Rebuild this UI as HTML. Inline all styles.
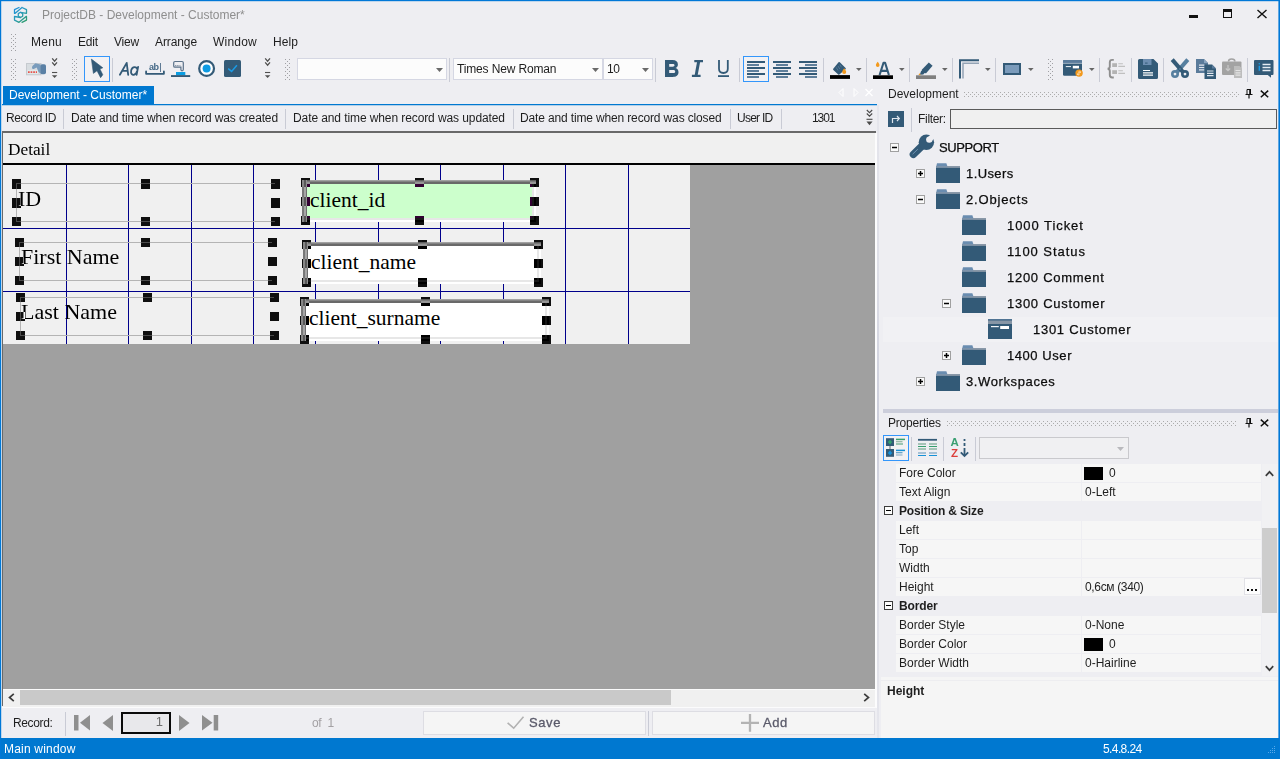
<!DOCTYPE html>
<html>
<head>
<meta charset="utf-8">
<title>ProjectDB</title>
<style>
*{box-sizing:border-box;margin:0;padding:0}
html,body{width:1280px;height:759px;overflow:hidden;background:#eeeef2}
body{font-family:"Liberation Sans",sans-serif;font-size:12px;color:#1e1e1e;position:relative}
.a{position:absolute}
.t{position:absolute;white-space:nowrap;line-height:16px;height:16px}
.serif{font-family:"Liberation Serif",serif}
.h{position:absolute;width:9px;height:9px;background:#fff;mix-blend-mode:difference}
.dt{font-size:22px;line-height:24px;height:24px;color:#000}
.gv{position:absolute;top:165px;height:179px;width:1px;background:#00008b}
.gh{position:absolute;left:3px;width:687px;height:1px;background:#00008b}
.sep{position:absolute;width:1px;background:#c9cbd5}
.grip{position:absolute;width:5px;background:
 linear-gradient(#a0a0a4,#a0a0a4) 0 0/1px 1px,
 linear-gradient(#a0a0a4,#a0a0a4) 4px 0/1px 1px,
 linear-gradient(#a0a0a4,#a0a0a4) 2px 2px/1px 1px;background-repeat:repeat-y;background-size:1px 4px,1px 4px,1px 4px;
 background-image:linear-gradient(#a0a0a4 1px,transparent 1px),linear-gradient(#a0a0a4 1px,transparent 1px),linear-gradient(transparent 2px,#a0a0a4 2px,#a0a0a4 3px,transparent 3px);background-position:0 0,4px 0,2px 0}
.hgrip{position:absolute;height:5px;background-repeat:repeat-x;background-size:4px 1px,4px 1px,4px 1px;
 background-image:linear-gradient(90deg,#ababab 1px,transparent 1px),linear-gradient(90deg,#ababab 1px,transparent 1px),linear-gradient(90deg,transparent 2px,#ababab 2px,#ababab 3px,transparent 3px);background-position:0 0,0 4px,0 2px}
.ol{position:absolute;border:1px solid #b4b4b4;border-right:none}
.tree{font-size:13px;line-height:16px;color:#0c0c0c;-webkit-text-stroke:0.250px #0c0c0c}
.prow{position:absolute;left:895px;width:366px;height:19px}
.prow .n{position:absolute;left:4px;top:2px;line-height:15px;white-space:nowrap}
.prow .v{position:absolute;left:190px;top:2px;line-height:15px;white-space:nowrap}
</style>
</head>
<body>
<!-- window frame -->
<div class="a" id="frame" style="left:0;top:0;width:1280px;height:759px;border:1px solid #0078d7;border-bottom:none;z-index:5;pointer-events:none"></div><div class="a" style="left:1278px;top:1px;width:1px;height:737px;background:#0078d7;opacity:.6;z-index:5"></div><div class="a" style="left:1px;top:1px;width:1px;height:737px;background:#0078d7;opacity:.2;z-index:5"></div><div class="a" style="left:1px;top:1px;width:1278px;height:1px;background:#0078d7;opacity:.2;z-index:5"></div>

<!-- TITLE BAR -->
<div id="titlebar">
<svg class="a" style="left:8px;top:2px" width="28" height="26" viewBox="8 2 28 26" fill="none" stroke="url(#lg)" stroke-width="1.300" stroke-linejoin="round" stroke-linecap="round"><defs><linearGradient id="lg" gradientUnits="userSpaceOnUse" x1="14" y1="8" x2="27" y2="22"><stop offset="0" stop-color="#1e8fe0"/><stop offset=".5" stop-color="#2a9cb4"/><stop offset="1" stop-color="#2f9c62"/></linearGradient></defs>
<path d="M14.500 13.400V9.700L19 7.500M22 7.500L14.900 13.400M22 7.500L26.500 9.700V13.300L20.500 12.300"/><path d="M26.500 16.400V20.100L22 22.300M19 22.300L26.100 16.400M19 22.300L14.500 20.100V16.500L20.500 17.500"/><path d="M20.500 12.300L22.700 13.600V16.200L20.500 17.500L18.300 16.200V13.600Z"/></svg>
<div class="t" style="left:42px;top:7px;font-size:12px;color:#8e8e8e" id="title">ProjectDB - Development - Customer*</div>
<div class="a" style="left:1189px;top:15px;width:9px;height:3px;background:#111"></div>
<div class="a" style="left:1223px;top:9px;width:9px;height:9px;border:1px solid #111;border-top-width:3px"></div>
<svg class="a" style="left:1256px;top:8px" width="12" height="12" viewBox="0 0 12 12" stroke="#111" stroke-width="1.4"><path d="M1.5 2l9 8M10.5 2l-9 8"/></svg>
</div>

<!-- MENU -->
<div id="menubar" style="font-size:12px">
<div class="t" style="left:31px;top:34px;letter-spacing:0.24px">Menu</div>
<div class="t" style="left:78px;top:34px;letter-spacing:-0.17px">Edit</div>
<div class="t" style="left:114px;top:34px;letter-spacing:-0.2px">View</div>
<div class="t" style="left:155px;top:34px;letter-spacing:-0.1px">Arrange</div>
<div class="t" style="left:213px;top:34px;letter-spacing:0.22px">Window</div>
<div class="t" style="left:273px;top:34px;letter-spacing:0.08px">Help</div>
</div>

<!-- TOOLBAR -->
<div id="toolbar">
<div class="grip" style="left:11px;top:34px;height:18px"></div>
<div class="grip" style="left:11px;top:59px;height:22px"></div>
<!-- card+hand (disabled) -->
<svg class="a" style="left:26px;top:62px" width="21" height="14" viewBox="0 0 21 14"><rect x=".500" y="1.500" width="14.500" height="11.300" fill="#d8dde1" stroke="#c6cacf"/><rect x="1.500" y="8" width="10.500" height="4" fill="#e0eaeb"/><path d="M2 10.100h9" stroke="#e8504a" stroke-width="1.800" stroke-dasharray="1.700 .900"/><path d="M6 5.300C6 4 8 2.500 9.500 1.200L14.500 2.500V11.500L12.500 10L10.700 5.600L7.800 7C6.500 7.300 6 6.500 6 5.300z" fill="#7a9cbd"/><rect x="14.300" y="2.200" width="5.700" height="10" rx="1.800" fill="#5a80a5"/></svg>
<svg class="a" style="left:51px;top:57px" width="8" height="22" viewBox="0 0 8 22" fill="none" stroke="#505050" stroke-width="1.300"><path d="M1.200 1.400l2.400 2.800 2.400-2.800M1.200 5.400l2.400 2.800 2.400-2.800"/><path d="M1 15.500h5.200" stroke-width="1.100"/><path d="M.900 18.200h5.400L3.600 21z" fill="#505050" stroke="none"/></svg>
<div class="grip" style="left:72px;top:59px;height:22px"></div>
<div class="a" style="left:84px;top:56px;width:26px;height:26px;border:1px solid #3396fb;background:#f2f1f3"></div>
<svg class="a" style="left:89px;top:58px" width="16" height="21" viewBox="0 0 16 21"><path d="M2.400 1.100L13.800 9.800L10.900 11L13.800 16.800L11.600 19.700L8 12.700L4.400 15.400z" fill="#335a77" stroke="#335a77" stroke-width=".600" stroke-linejoin="round"/></svg>
<div class="sep" style="left:112px;top:58px;height:24px"></div>
<svg class="a" style="left:117px;top:60px" width="24" height="18" viewBox="117 60 24 18" fill="none" stroke="#335a77" stroke-width="1.800" stroke-linecap="round" stroke-linejoin="round"><path d="M119.900 74.800L126.700 62.900L128.200 74.800M122.600 70.800h5"/><path d="M138.100 66.800L136.600 74.900M137.500 69.500C136.700 66.300 132.300 66 131.200 70.200C130.300 74.200 132.600 75.400 134.300 74.700C135.900 74 136.700 72.700 137 71.300"/></svg>
<!-- abl -->
<div class="t" style="left:149px;top:61px;font-size:9px;line-height:12px;height:12px;font-weight:bold;color:#456987;letter-spacing:-0.550px">ab</div><div class="a" style="left:159.500px;top:63px;width:1.400px;height:9px;background:#5f7a94"></div>
<svg class="a" style="left:145px;top:69px" width="21" height="7" viewBox="0 0 21 7" fill="none" stroke="#335a77" stroke-width="1.800" stroke-linecap="round" stroke-linejoin="round"><path d="M1.100 2.500v2.300h17.800v-2.300"/></svg>
<!-- button -->
<svg class="a" style="left:171px;top:60px" width="20" height="18" viewBox="0 0 20 18"><path d="M4 1.500h7a1.300 1.300 0 0 1 1.300 1.300v6.800a1.200 1.200 0 0 1-2.400 0v-2.400h-5.900a1.300 1.300 0 0 1-1.300-1.300v-3.100a1.300 1.300 0 0 1 1.300-1.300z" fill="none" stroke="#5a7189" stroke-width="1.200"/><path d="M4 5.700h5.500" stroke="#7b8b9b" stroke-width="1" stroke-dasharray="1.200 .500"/><rect x="5" y="12" width="9.300" height="3.200" fill="#0a9de2"/><rect x="0" y="15.100" width="19.200" height="1.900" fill="#335a77"/></svg>
<!-- radio -->
<svg class="a" style="left:197px;top:59px" width="19" height="19" viewBox="0 0 19 19"><circle cx="9.600" cy="9.500" r="7.400" fill="#fff" stroke="#335a77" stroke-width="2.200"/><circle cx="9.600" cy="9.500" r="4" fill="#0d9be3"/></svg>
<!-- checkbox -->
<svg class="a" style="left:224px;top:60px" width="17" height="17" viewBox="0 0 17 17"><rect x="0" y="0" width="17" height="17" rx="1.500" fill="#335a77"/><path d="M4.200 8.600l3.400 2.800 5.300-6.200" fill="none" stroke="#1a9be6" stroke-width="1.500"/></svg>
<svg class="a" style="left:264px;top:57px" width="8" height="22" viewBox="0 0 8 22" fill="none" stroke="#505050" stroke-width="1.300"><path d="M1.200 1.400l2.400 2.800 2.400-2.800M1.200 5.400l2.400 2.800 2.400-2.800"/><path d="M1 15.500h5.200" stroke-width="1.100"/><path d="M.900 18.200h5.400L3.600 21z" fill="#505050" stroke="none"/></svg>
<div class="grip" style="left:285px;top:59px;height:22px"></div>
<!-- combos -->
<div class="a" style="left:297px;top:58px;width:150px;height:22px;border:1px solid #d5d7e3;background:#fcfcfc"></div>
<svg class="a" style="left:436px;top:68px" width="7" height="4" viewBox="0 0 7 4"><path d="M0 0h7L3.5 4z" fill="#6a6a6a"/></svg>
<div class="sep" style="left:449px;top:58px;height:24px"></div>
<div class="a" style="left:453px;top:58px;width:150px;height:22px;border:1px solid #d5d7e3;background:#fcfcfc"></div>
<div class="t" style="left:457px;top:61px;letter-spacing:-0.15px" id="tnr">Times New Roman</div>
<svg class="a" style="left:592px;top:68px" width="7" height="4" viewBox="0 0 7 4"><path d="M0 0h7L3.5 4z" fill="#6a6a6a"/></svg>
<div class="a" style="left:603px;top:58px;width:50px;height:22px;border:1px solid #d5d7e3;background:#fcfcfc"></div>
<div class="t" style="left:607px;top:61px;letter-spacing:-0.500px">10</div>
<svg class="a" style="left:642px;top:68px" width="7" height="4" viewBox="0 0 7 4"><path d="M0 0h7L3.5 4z" fill="#6a6a6a"/></svg>
<div class="sep" style="left:655px;top:58px;height:24px"></div>
<!-- B I U -->
<svg class="a" style="left:665px;top:60px" width="14" height="17" viewBox="0 0 14 17"><path fill-rule="evenodd" fill="#335a77" d="M0 0h7.600c3.300 0 5.300 1.600 5.300 4.400c0 1.800-.9 3.100-2.400 3.700c1.900 .5 3 2 3 4.200c0 3-2.200 4.700-5.700 4.700h-7.800zM4.200 3.900v2.900h3.500c1.100 0 1.800-.5 1.800-1.450s-.7-1.450-1.800-1.450zM4.200 9.900v3.200h4.100c1.200 0 1.900-.6 1.900-1.600s-.7-1.600-1.900-1.600z"/></svg>
<svg class="a" style="left:691px;top:60px" width="13" height="18" viewBox="0 0 13 18" fill="none" stroke="#335a77"><path d="M3.300 1.100h8.700M.900 15.900h8.700" stroke-width="2.200"/><path d="M7.700 1.500L5.100 15.500" stroke-width="3"/></svg>
<svg class="a" style="left:717px;top:59px" width="13" height="19" viewBox="0 0 13 19" fill="none" stroke="#335a77"><path d="M2 1v8.800c0 2.700 1.700 4.200 4.400 4.200s4.400-1.500 4.400-4.200v-8.800" stroke-width="1.800"/><path d="M1 17.100h11" stroke-width="1.800"/></svg>
<div class="sep" style="left:739px;top:58px;height:24px"></div>
<div class="a" style="left:743px;top:56px;width:26px;height:26px;border:1px solid #3396fb;background:#f2f1f3"></div>
<div class="a" style="left:747px;top:61px;width:18px;height:2px;background:#335a77"></div><div class="a" style="left:747px;top:64px;width:12px;height:2px;background:#5f7f9b"></div><div class="a" style="left:747px;top:67px;width:18px;height:2px;background:#335a77"></div><div class="a" style="left:747px;top:70px;width:12px;height:2px;background:#5f7f9b"></div><div class="a" style="left:747px;top:73px;width:18px;height:2px;background:#335a77"></div><div class="a" style="left:747px;top:76px;width:12px;height:2px;background:#5f7f9b"></div>
<div class="a" style="left:773px;top:61px;width:18px;height:2px;background:#335a77"></div><div class="a" style="left:776px;top:64px;width:12px;height:2px;background:#5f7f9b"></div><div class="a" style="left:773px;top:67px;width:18px;height:2px;background:#335a77"></div><div class="a" style="left:776px;top:70px;width:12px;height:2px;background:#5f7f9b"></div><div class="a" style="left:773px;top:73px;width:18px;height:2px;background:#335a77"></div><div class="a" style="left:776px;top:76px;width:12px;height:2px;background:#5f7f9b"></div>
<div class="a" style="left:799px;top:61px;width:18px;height:2px;background:#335a77"></div><div class="a" style="left:805px;top:64px;width:12px;height:2px;background:#5f7f9b"></div><div class="a" style="left:799px;top:67px;width:18px;height:2px;background:#335a77"></div><div class="a" style="left:805px;top:70px;width:12px;height:2px;background:#5f7f9b"></div><div class="a" style="left:799px;top:73px;width:18px;height:2px;background:#335a77"></div><div class="a" style="left:805px;top:76px;width:12px;height:2px;background:#5f7f9b"></div>
<div class="sep" style="left:823px;top:58px;height:24px"></div>
<!-- fill bucket -->
<svg class="a" style="left:829px;top:60px" width="22" height="20" viewBox="0 0 22 20"><path d="M10.200 2.900L16 8.500L9.800 13.800L4.900 9.400z" fill="#335a77" stroke="#335a77" stroke-width="1.700" stroke-linejoin="round"/><path d="M7.200 7.400l1.800 3M9 6l1.800 3M10.800 4.600l1.600 2.600" stroke="#5f83a3" stroke-width=".700"/><path d="M15.200 8.300c1.300 1.800 2 2.700 2 3.600a2 2 0 0 1-4 0c0-.900 .700-1.800 2-3.600z" fill="#f39a1e"/><rect x="1" y="15.100" width="20" height="3.800" fill="#000"/></svg>
<svg class="a" style="left:856px;top:68px" width="6" height="3" viewBox="0 0 6 3"><path d="M0 0h5.600L2.800 3z" fill="#666"/></svg>
<div class="sep" style="left:866px;top:58px;height:24px"></div>
<!-- font color -->
<svg class="a" style="left:872px;top:60px" width="22" height="20" viewBox="0 0 22 20"><path d="M5.700 1.800c1.200 1.700 1.800 2.500 1.800 3.400a1.800 1.800 0 0 1-3.600 0c0-.9 .6-1.700 1.800-3.400z" fill="#f39a1e"/><path d="M7.600 15L11.500 2.800h1.600L16.900 15M9 10.900h6.500" fill="none" stroke="#335a77" stroke-width="2.100" stroke-linejoin="round"/><rect x="1" y="15.300" width="20" height="3.700" fill="#000"/></svg>
<svg class="a" style="left:899px;top:68px" width="6" height="3" viewBox="0 0 6 3"><path d="M0 0h5.600L2.800 3z" fill="#666"/></svg>
<div class="sep" style="left:909px;top:58px;height:24px"></div>
<!-- highlighter -->
<svg class="a" style="left:915px;top:60px" width="22" height="20" viewBox="0 0 22 20"><path d="M13.800 2.500l3.800 3.300-6.500 7.500-4-.3-.3-3.200z" fill="#335a77"/><path d="M6.300 10.500l3 2.800-1 1.200-3.500 .3z" fill="#335a77"/><path d="M4.300 13.300l1.500 1.500-2.300 .4z" fill="#f39a1e"/><rect x="1" y="15.300" width="20" height="3.700" fill="#7f7f7f"/></svg>
<svg class="a" style="left:942px;top:68px" width="6" height="3" viewBox="0 0 6 3"><path d="M0 0h5.600L2.800 3z" fill="#666"/></svg>
<div class="sep" style="left:952px;top:58px;height:24px"></div>
<!-- border corner -->
<svg class="a" style="left:958px;top:58px" width="22" height="22" viewBox="0 0 22 22" fill="none"><path d="M2 20.500V2.200h19" stroke="#335a77" stroke-width="2"/><path d="M5 20.500V5.200h16" stroke="#93a3b5" stroke-width="1.500"/></svg>
<svg class="a" style="left:985px;top:68px" width="6" height="3" viewBox="0 0 6 3"><path d="M0 0h5.600L2.800 3z" fill="#666"/></svg>
<div class="sep" style="left:995px;top:58px;height:24px"></div>
<!-- rect -->
<div class="a" style="left:1003px;top:63px;width:18px;height:12px;background:#7b9bbb;border:2px solid #335a77"></div>
<svg class="a" style="left:1028px;top:68px" width="6" height="3" viewBox="0 0 6 3"><path d="M0 0h5.600L2.800 3z" fill="#666"/></svg>
<div class="grip" style="left:1048px;top:59px;height:22px"></div>
<!-- form icon -->
<svg class="a" style="left:1063px;top:60px" width="21" height="18" viewBox="0 0 21 18"><rect x="0" y="0" width="19" height="15.800" rx="1.300" fill="#335a77"/><path d="M0 3V1.300A1.300 1.300 0 0 1 1.300 0h16.400A1.300 1.300 0 0 1 19 1.300V3z" fill="#5a7b9b"/><rect x="0" y="2.900" width="19" height=".800" fill="#b9c6d3"/><rect x="2.800" y="6" width="5.200" height="1.100" fill="#dfe6ec"/><rect x="9.800" y="5.800" width="6.200" height="2.600" fill="#fff"/><circle cx="16.100" cy="13.100" r="3.700" fill="#f39a1e"/><path d="M14.400 14.200h2.200M15.200 12.100h2.400M16.600 11.200l1 .900-1 .900M15.400 15.100l-1-.900 1-.900" stroke="#fdebd0" stroke-width=".900" fill="none"/></svg>
<svg class="a" style="left:1089px;top:68px" width="6" height="3" viewBox="0 0 6 3"><path d="M0 0h5.600L2.800 3z" fill="#666"/></svg>
<div class="sep" style="left:1099px;top:58px;height:24px"></div>
<!-- brace list (disabled) -->
<svg class="a" style="left:1106px;top:58px" width="21" height="22" viewBox="0 0 21 22" fill="none"><path d="M7.800 1.900h-1.600c-1.600 0-2.400 .900-2.400 2.400v4.100c0 1.400-.700 2.100-2.100 2.300c1.400 .200 2.100 .900 2.100 2.300v4.100c0 1.500 .800 2.400 2.400 2.400h1.600" stroke="#8f8f8f" stroke-width="1.900"/><rect x="6.200" y="5.200" width="4.800" height="3.800" fill="#b3b3b3"/><rect x="6.200" y="12.200" width="4.800" height="3.800" fill="#b3b3b3"/><path d="M12.300 5.700h4.600M12.300 8.400h6.700M12.300 12.700h4.600M12.300 15.400h6.700" stroke="#c0c0c0" stroke-width="1.100"/></svg>
<div class="sep" style="left:1131px;top:58px;height:24px"></div>
<!-- save -->
<svg class="a" style="left:1138px;top:59px" width="20" height="20" viewBox="0 0 20 20"><path d="M1.500 0h14l4.500 4.500v14a1.500 1.500 0 0 1-1.500 1.500h-17a1.500 1.500 0 0 1-1.500-1.500v-17a1.500 1.500 0 0 1 1.500-1.500z" fill="#335a77"/><rect x="5" y="0" width="8.500" height="6" fill="#6d8db0"/><rect x="7" y="3.600" width="2.600" height="1" fill="#335a77"/><path d="M5 11.500h7M5 13.800h10M5 16.100h10" stroke="#fff" stroke-width="1.200"/></svg>
<div class="sep" style="left:1163px;top:58px;height:24px"></div>
<!-- scissors -->
<svg class="a" style="left:1170px;top:58px" width="20" height="21" viewBox="0 0 20 21"><path d="M17.800 1.600L6.500 14.600" stroke="#567f9f" stroke-width="4"/><path d="M2.200 1.600L13.500 14.600" stroke="#335a77" stroke-width="4"/><circle cx="5" cy="16.100" r="2.700" fill="none" stroke="#567f9f" stroke-width="2.600"/><circle cx="15" cy="16.100" r="2.700" fill="none" stroke="#335a77" stroke-width="2.600"/><circle cx="10" cy="11" r=".900" fill="#567f9f"/></svg>
<!-- copy -->
<svg class="a" style="left:1196px;top:59px" width="21" height="20" viewBox="0 0 21 20"><path d="M0 0h8l4 4v10h-12z" fill="#5a7b9b"/><path d="M8 0v4h4z" fill="#8aa5c0"/><path d="M3 6.200h5.500M3 8.500h5.500M3 10.800h5.500" stroke="#dfe6ee" stroke-width="1.200"/><path d="M8.500 5.500h7.500l4 4v10.500h-11.500z" fill="#335a77"/><path d="M16 5.500v4h4z" fill="#5a7b9b"/><path d="M11 12h6.500M11 14.300h6.500M11 16.600h6.500" stroke="#dfe6ee" stroke-width="1.200"/></svg>
<!-- paste (disabled) -->
<svg class="a" style="left:1222px;top:58px" width="21" height="21" viewBox="0 0 21 21"><path d="M6.500 3.500c0-1.500 1.200-2.500 3.200-2.500s3.200 1 3.200 2.500" fill="none" stroke="#a3a3a3" stroke-width="1.500"/><rect x="0" y="3.500" width="19.500" height="13.500" rx="1" fill="#a3a3a3"/><path d="M6 7v5.500M3.800 10.500l2.200 2.200 2.200-2.200" fill="none" stroke="#c9c9c9" stroke-width="1.200"/><path d="M12 8h5.500l2.500 2.500v9.500h-8z" fill="#bdbdbd"/><path d="M13.500 12.500h5M13.500 14.800h5M13.500 17.100h5" stroke="#e3e3e3" stroke-width="1.200"/></svg>
<div class="sep" style="left:1247px;top:58px;height:24px"></div>
<!-- comment -->
<svg class="a" style="left:1254px;top:60px" width="20" height="18" viewBox="0 0 20 18"><path d="M1 0h17.500a1 1 0 0 1 1 1v13a1 1 0 0 1-1 1h-1.500v2.800l-3.200-2.800h-12.800a1 1 0 0 1-1-1v-13a1 1 0 0 1 1-1z" fill="#335a77"/><path d="M8.500 4.500h8M8.500 7.500h8M8.500 10.500h8" stroke="#e6ecf2" stroke-width="1.300"/><path d="M5.300 5.800v5" stroke="#1a9be6" stroke-width="1.400"/><circle cx="5.300" cy="3.800" r=".8" fill="#1a9be6"/></svg>
</div>

<!-- DOC TAB -->
<div class="a" style="left:3px;top:86px;width:151px;height:18px;background:#0078d0"></div>
<div class="a" style="left:2px;top:104px;width:875px;height:1px;background:#0078d0"></div><div class="a" style="left:2px;top:105px;width:875px;height:1px;background:#0078d0;opacity:.25"></div>
<div class="t" style="left:9px;top:87px;color:#fff" id="tabtxt">Development - Customer*</div>

<!-- RECORD HEADER -->
<div id="rechead">
<div class="t" style="left:6px;top:110px;letter-spacing:-0.45px">Record ID</div>
<div class="sep" style="left:63px;top:109px;height:20px"></div>
<div class="t" style="left:71px;top:110px;letter-spacing:-0.14px">Date and time when record was created</div>
<div class="sep" style="left:285px;top:109px;height:20px"></div>
<div class="t" style="left:293px;top:110px;letter-spacing:-0.095px">Date and time when record was updated</div>
<div class="sep" style="left:513px;top:109px;height:20px"></div>
<div class="t" style="left:520px;top:110px;letter-spacing:-0.147px">Date and time when record was closed</div>
<div class="sep" style="left:730px;top:109px;height:20px"></div>
<div class="t" style="left:737px;top:110px;letter-spacing:-0.74px">User ID</div>
<div class="sep" style="left:781px;top:109px;height:20px"></div>
<div class="t" style="left:812px;top:110px;letter-spacing:-1.05px">1301</div>
</div>

<!-- DESIGN SURFACE -->
<div id="design">
<div class="a" style="left:2px;top:131px;width:873px;height:558px;background:#a0a0a0"></div>
<div class="a" style="left:2px;top:131px;width:874px;height:2px;background:#696969"></div>
<div class="a" style="left:2px;top:131px;width:1px;height:575px;background:#696969;z-index:2"></div>
<div class="a" style="left:3px;top:133px;width:872px;height:30px;background:#f0f0f0"></div>
<div class="a" style="left:3px;top:163px;width:872px;height:2px;background:#000"></div>
<div class="a" style="left:3px;top:165px;width:687px;height:179px;background:#f0f0f0"></div>
<div class="t serif" style="left:8px;top:140px;font-size:17.300px;line-height:20px;height:20px;color:#000">Detail</div>
<div id="surface" class="a" style="left:0;top:0;width:876px;height:344px;overflow:hidden"><div class="gv" style="left:66px"></div><div class="gv" style="left:128px"></div><div class="gv" style="left:191px"></div><div class="gv" style="left:253px"></div><div class="gv" style="left:315px"></div><div class="gv" style="left:378px"></div><div class="gv" style="left:440px"></div><div class="gv" style="left:503px"></div><div class="gv" style="left:565px"></div><div class="gv" style="left:628px"></div><div class="gh" style="top:228px"></div><div class="gh" style="top:291px"></div><div class="ol" style="left:16px;top:183px;width:259px;height:39px"></div><div class="t serif dt" style="left:18px;top:187px;letter-spacing:0px">ID</div><div class="h" style="left:12px;top:179px;height:10px"></div><div class="h" style="left:12px;top:198px;height:10px"></div><div class="h" style="left:12px;top:217px"></div><div class="h" style="left:141px;top:179px;height:10px"></div><div class="h" style="left:141px;top:217px"></div><div class="h" style="left:271px;top:179px;height:10px"></div><div class="h" style="left:271px;top:198px;height:10px"></div><div class="h" style="left:271px;top:217px"></div><div class="ol" style="left:19px;top:242px;width:253px;height:39px"></div><div class="t serif dt" style="left:21px;top:245px;letter-spacing:0px">First Name</div><div class="h" style="left:15px;top:238px"></div><div class="h" style="left:15px;top:257px"></div><div class="h" style="left:15px;top:276px"></div><div class="h" style="left:141px;top:238px"></div><div class="h" style="left:141px;top:276px"></div><div class="h" style="left:268px;top:238px"></div><div class="h" style="left:268px;top:257px"></div><div class="h" style="left:268px;top:276px"></div><div class="ol" style="left:20px;top:297px;width:254px;height:39px"></div><div class="t serif dt" style="left:21px;top:300px;letter-spacing:0px">Last Name</div><div class="h" style="left:16px;top:293px"></div><div class="h" style="left:16px;top:312px"></div><div class="h" style="left:16px;top:331px"></div><div class="h" style="left:143px;top:293px"></div><div class="h" style="left:143px;top:331px"></div><div class="h" style="left:270px;top:293px"></div><div class="h" style="left:270px;top:312px"></div><div class="h" style="left:270px;top:331px"></div><div class="a" style="left:302px;top:180px;width:234px;height:42px;background:#fff"></div><div class="a" style="left:302px;top:180px;width:232px;height:40px;background:#e7e7e7"></div><div class="a" style="left:307px;top:184px;width:225px;height:34px;background:#ccffcc"></div><div class="a" style="left:302px;top:180px;width:234px;height:4px;background:linear-gradient(#a2a2a2 0,#a2a2a2 1px,#848484 1px,#848484 2px,#696969 2px)"></div><div class="a" style="left:302px;top:180px;width:5px;height:42px;background:linear-gradient(90deg,#787878 0,#787878 2px,#a6a6a6 2px,#a6a6a6 4px,#6e6e6e 4px)"></div><div class="t serif dt" style="font-size:21.500px;left:310px;top:188px;letter-spacing:0px">client_id</div><div class="h" style="left:301px;top:178px"></div><div class="h" style="left:301px;top:197px"></div><div class="h" style="left:301px;top:216px"></div><div class="h" style="left:415px;top:178px"></div><div class="h" style="left:415px;top:216px"></div><div class="h" style="left:530px;top:178px"></div><div class="h" style="left:530px;top:197px"></div><div class="h" style="left:530px;top:216px"></div><div class="a" style="left:303px;top:242px;width:238px;height:42px;background:#fff"></div><div class="a" style="left:303px;top:242px;width:236px;height:40px;background:#e7e7e7"></div><div class="a" style="left:308px;top:246px;width:229px;height:34px;background:#fff"></div><div class="a" style="left:303px;top:242px;width:238px;height:4px;background:linear-gradient(#a2a2a2 0,#a2a2a2 1px,#848484 1px,#848484 2px,#696969 2px)"></div><div class="a" style="left:303px;top:242px;width:5px;height:42px;background:linear-gradient(90deg,#787878 0,#787878 2px,#a6a6a6 2px,#a6a6a6 4px,#6e6e6e 4px)"></div><div class="t serif dt" style="font-size:21.500px;left:311px;top:250px;letter-spacing:0px">client_name</div><div class="h" style="left:302px;top:240px"></div><div class="h" style="left:302px;top:259px"></div><div class="h" style="left:302px;top:278px"></div><div class="h" style="left:418px;top:240px"></div><div class="h" style="left:418px;top:278px"></div><div class="h" style="left:534px;top:240px"></div><div class="h" style="left:534px;top:259px"></div><div class="h" style="left:534px;top:278px"></div><div class="a" style="left:301px;top:299px;width:248px;height:42px;background:#fff"></div><div class="a" style="left:301px;top:299px;width:246px;height:40px;background:#e7e7e7"></div><div class="a" style="left:306px;top:303px;width:239px;height:34px;background:#fff"></div><div class="a" style="left:301px;top:299px;width:248px;height:4px;background:linear-gradient(#a2a2a2 0,#a2a2a2 1px,#848484 1px,#848484 2px,#696969 2px)"></div><div class="a" style="left:301px;top:299px;width:5px;height:42px;background:linear-gradient(90deg,#787878 0,#787878 2px,#a6a6a6 2px,#a6a6a6 4px,#6e6e6e 4px)"></div><div class="t serif dt" style="font-size:21.500px;left:309px;top:306px;letter-spacing:0px">client_surname</div><div class="h" style="left:300px;top:297px"></div><div class="h" style="left:300px;top:316px"></div><div class="h" style="left:300px;top:335px"></div><div class="h" style="left:421px;top:297px"></div><div class="h" style="left:421px;top:335px"></div><div class="h" style="left:542px;top:297px"></div><div class="h" style="left:542px;top:316px"></div><div class="h" style="left:542px;top:335px"></div></div>
</div>

<div class="a" style="left:875px;top:133px;width:2px;height:575px;background:#fcfcfd"></div><div class="a" style="left:877px;top:105px;width:2px;height:633px;background:linear-gradient(rgba(204,206,219,.25) 0,rgba(204,206,219,.45) 25%,#cccedb 50%,rgba(204,206,219,.45) 80%,rgba(204,206,219,.25) 100%)"></div>
<!-- H SCROLLBAR -->
<div class="a" style="left:3px;top:689px;width:872px;height:18px;background:#f0f0f0;border-top:1px solid #fbfbfb"></div>
<div class="a" style="left:20px;top:690px;width:651px;height:15px;background:#c9c9c9"></div>
<div class="a" style="left:2px;top:707px;width:874px;height:1px;background:#fbfbfc"></div>

<!-- RECORD NAV -->
<div id="recnav">
<svg class="a" style="left:8px;top:693px" width="7" height="9" viewBox="0 0 7 9" fill="none" stroke="#3c3c3c" stroke-width="1.700"><path d="M5.800 .8L1.500 4.500l4.300 3.700"/></svg>
<svg class="a" style="left:863px;top:693px" width="7" height="9" viewBox="0 0 7 9" fill="none" stroke="#3c3c3c" stroke-width="1.700"><path d="M1.200 .8L5.500 4.500l-4.300 3.700"/></svg>
<div class="t" style="left:13px;top:715px;letter-spacing:-0.36px" id="reclbl">Record:</div>
<div class="sep" style="left:65px;top:712px;height:24px"></div>
<svg class="a" style="left:74px;top:715px" width="17" height="16" viewBox="0 0 17 16" fill="#8f8f8f"><rect x="0" y="0" width="4.500" height="15.500"/><path d="M16 0v15.500L6 7.750z"/></svg>
<svg class="a" style="left:102px;top:715px" width="12" height="16" viewBox="0 0 12 16" fill="#8f8f8f"><path d="M11 0v16L.5 8z"/></svg>
<div class="a" style="left:121px;top:712px;width:50px;height:22px;border:2px solid #0a0a0a;background:#e8e8eb"></div>
<div class="t" style="left:150px;top:714px;width:13px;text-align:right;color:#6e6e6e;font-size:13px">1</div>
<svg class="a" style="left:179px;top:715px" width="12" height="16" viewBox="0 0 12 16" fill="#8f8f8f"><path d="M0 0v16l10.500-8z"/></svg>
<svg class="a" style="left:202px;top:715px" width="17" height="16" viewBox="0 0 17 16" fill="#8f8f8f"><rect x="11.700" y="0" width="4.500" height="15.500"/><path d="M0 0v15.500l10.500-7.750z"/></svg>
<div class="t" style="left:312px;top:715px;color:#a3a0a3;letter-spacing:-0.300px" id="of1">of&nbsp; 1</div>
<div class="a" style="left:423px;top:711px;width:223px;height:24px;border:1px solid #dddde3;background:#f5f5f5"></div>
<svg class="a" style="left:507px;top:715px" width="18" height="15" viewBox="0 0 18 15" fill="none" stroke="#b2b2b2" stroke-width="1.600"><path d="M.600 7.800l6.100 5.400L16.500 1.700"/></svg>
<div class="t" style="left:529px;top:715px;font-size:13px;color:#5a5a6a;letter-spacing:0.600px;-webkit-text-stroke:0.300px #5a5a6a" id="savet">Save</div>
<div class="sep" style="left:648px;top:711px;height:25px"></div>
<div class="a" style="left:652px;top:711px;width:223px;height:24px;border:1px solid #dddde3;background:#f5f5f5"></div>
<svg class="a" style="left:741px;top:714px" width="18" height="18" viewBox="0 0 18 18" stroke="#b3b3b3" stroke-width="2.300"><path d="M9 .100v17.700M0 8.900h18"/></svg>
<div class="t" style="left:763px;top:715px;font-size:13px;color:#5a5a6a;letter-spacing:0.600px;-webkit-text-stroke:0.300px #5a5a6a" id="addt">Add</div>
</div>

<!-- STATUS BAR -->
<div class="a" style="left:0;top:738px;width:1280px;height:21px;background:#0078d0"></div>
<div class="t" style="left:4px;top:741px;color:#fff;letter-spacing:0.200px">Main window</div>
<div class="t" style="left:1103px;top:741px;color:#fff;letter-spacing:-0.600px">5.4.8.24</div><svg class="a" style="left:1267px;top:746px" width="9" height="9" viewBox="0 0 9 9" fill="#58a8ea"><rect x="7" y="0" width="1" height="1"/><rect x="5" y="2" width="1" height="1"/><rect x="7" y="2" width="1" height="1"/><rect x="3" y="4" width="1" height="1"/><rect x="5" y="4" width="1" height="1"/><rect x="7" y="4" width="1" height="1"/><rect x="1" y="6" width="1" height="1"/><rect x="3" y="6" width="1" height="1"/><rect x="5" y="6" width="1" height="1"/><rect x="7" y="6" width="1" height="1"/></svg>

<!-- RIGHT: DEVELOPMENT PANEL -->
<div id="devpanel">
<!-- doc tab nav (white faint) -->
<svg class="a" style="left:838px;top:88px" width="36" height="10" viewBox="0 0 36 10" fill="none" stroke="#fff" stroke-width="1"><path d="M5 .5v8l-4-4z"/><path d="M16 .5v8l4-4z"/><path d="M27.500 1l7 7M34.500 1l-7 7" stroke-width="1.400"/></svg>
<svg class="a" style="left:866px;top:109px" width="7" height="17" viewBox="0 0 7 17" fill="none" stroke="#4a4a4a" stroke-width="1.100"><path d="M.8 1l2.700 2.700 2.700-2.700M.8 4.500l2.700 2.700 2.700-2.700"/><path d="M.500 10.300h6"/><path d="M.500 12.600h6L3.500 16.200z" fill="#4a4a4a" stroke="none"/></svg>
<div class="t" style="left:888px;top:86px" id="devt">Development</div>
<div class="hgrip" style="left:964px;top:92px;width:275px"></div>
<svg class="a" style="left:1245px;top:89px" width="8" height="10" viewBox="0 0 8 10" fill="none" stroke="#111" stroke-width="1"><path d="M2 .500h4M2 .500v5M5.500 .500v5" /><path d="M5 .500v5" stroke-width="1.600"/><path d="M.500 5.500h7M4 6v3.500" stroke-width="1.200"/></svg><svg class="a" style="left:1260px;top:90px" width="9" height="8" viewBox="0 0 9 8" stroke="#111" stroke-width="1.500"><path d="M.800 .600l7.400 6.600M8.200 .600l-7.400 6.600"/></svg>
<div class="a" style="left:888px;top:111px;width:16px;height:16px;background:#335a77"></div>
<svg class="a" style="left:891px;top:114px" width="10" height="10" viewBox="0 0 10 10" fill="none" stroke="#dfe6ee" stroke-width="1.200"><path d="M1.500 9V4.500h6.500M6 2l2.300 2.500L6 7"/></svg>
<div class="sep" style="left:911px;top:108px;height:24px"></div>
<div class="t" style="left:918px;top:111px;letter-spacing:-0.31px" id="filt">Filter:</div>
<div class="a" style="left:950px;top:109px;width:327px;height:20px;border:1px solid #5a5a5a;background:#f0f0f0"></div>
<svg class="a" style="left:890px;top:143px" width="9" height="9" viewBox="0 0 9 9"><rect x=".5" y=".5" width="8" height="8" fill="#fafafa" stroke="#a0a0a0"/><g stroke="#000" stroke-width="1.500"><path d="M2 4.500h5"/></g></svg><svg class="a" style="left:908px;top:133px" width="27" height="27" viewBox="0 0 27 27"><path d="M5.400 21.300L16 11" stroke="#335a77" stroke-width="7.400" stroke-linecap="round"/><circle cx="18.400" cy="9.300" r="7.700" fill="#335a77"/><circle cx="21.300" cy="6.600" r="3.200" fill="#eeeef2"/><path d="M21.300 6.600L27 1" stroke="#eeeef2" stroke-width="5.400"/><path d="M4.600 21.200l5.200-5" stroke="#7f9fbf" stroke-width=".800"/></svg><div class="t tree" style="left:939px;top:140px;letter-spacing:-0.40px" >SUPPORT</div><svg class="a" style="left:916px;top:169px" width="9" height="9" viewBox="0 0 9 9"><rect x=".5" y=".5" width="8" height="8" fill="#fafafa" stroke="#a0a0a0"/><g stroke="#000" stroke-width="1.500"><path d="M2 4.500h5"/><path d="M4.500 2v5" /></g></svg><svg class="a" style="left:936px;top:163px" width="24" height="20" viewBox="0 0 24 20"><path d="M.3 3L1 .300h9.400l.900 2.700z" fill="#6a8db0"/><rect x="0" y="3" width="24" height="2" fill="#8998a8"/><rect x="0" y="3" width="11.300" height="2" fill="#7d93aa"/><rect x="0" y="4.900" width="24" height="15.100" fill="#335a77"/></svg><div class="t tree" style="left:966px;top:166px;letter-spacing:0.40px" >1.Users</div><svg class="a" style="left:916px;top:195px" width="9" height="9" viewBox="0 0 9 9"><rect x=".5" y=".5" width="8" height="8" fill="#fafafa" stroke="#a0a0a0"/><g stroke="#000" stroke-width="1.500"><path d="M2 4.500h5"/></g></svg><svg class="a" style="left:936px;top:189px" width="24" height="20" viewBox="0 0 24 20"><path d="M.3 3L1 .300h9.400l.900 2.700z" fill="#6a8db0"/><rect x="0" y="3" width="24" height="2" fill="#8998a8"/><rect x="0" y="3" width="11.300" height="2" fill="#7d93aa"/><rect x="0" y="4.900" width="24" height="15.100" fill="#335a77"/></svg><div class="t tree" style="left:966px;top:192px;letter-spacing:0.84px" >2.Objects</div><svg class="a" style="left:962px;top:215px" width="24" height="20" viewBox="0 0 24 20"><path d="M.3 3L1 .300h9.400l.900 2.700z" fill="#6a8db0"/><rect x="0" y="3" width="24" height="2" fill="#8998a8"/><rect x="0" y="3" width="11.300" height="2" fill="#7d93aa"/><rect x="0" y="4.900" width="24" height="15.100" fill="#335a77"/></svg><div class="t tree" style="left:1007px;top:218px;letter-spacing:0.94px" >1000 Ticket</div><svg class="a" style="left:962px;top:241px" width="24" height="20" viewBox="0 0 24 20"><path d="M.3 3L1 .300h9.400l.900 2.700z" fill="#6a8db0"/><rect x="0" y="3" width="24" height="2" fill="#8998a8"/><rect x="0" y="3" width="11.300" height="2" fill="#7d93aa"/><rect x="0" y="4.900" width="24" height="15.100" fill="#335a77"/></svg><div class="t tree" style="left:1007px;top:244px;letter-spacing:0.96px" >1100 Status</div><svg class="a" style="left:962px;top:267px" width="24" height="20" viewBox="0 0 24 20"><path d="M.3 3L1 .300h9.400l.900 2.700z" fill="#6a8db0"/><rect x="0" y="3" width="24" height="2" fill="#8998a8"/><rect x="0" y="3" width="11.300" height="2" fill="#7d93aa"/><rect x="0" y="4.900" width="24" height="15.100" fill="#335a77"/></svg><div class="t tree" style="left:1007px;top:270px;letter-spacing:0.72px" >1200 Comment</div><svg class="a" style="left:962px;top:293px" width="24" height="20" viewBox="0 0 24 20"><path d="M.3 3L1 .300h9.400l.900 2.700z" fill="#6a8db0"/><rect x="0" y="3" width="24" height="2" fill="#8998a8"/><rect x="0" y="3" width="11.300" height="2" fill="#7d93aa"/><rect x="0" y="4.900" width="24" height="15.100" fill="#335a77"/></svg><div class="t tree" style="left:1007px;top:296px;letter-spacing:0.72px" >1300 Customer</div><svg class="a" style="left:942px;top:299px" width="9" height="9" viewBox="0 0 9 9"><rect x=".5" y=".5" width="8" height="8" fill="#fafafa" stroke="#a0a0a0"/><g stroke="#000" stroke-width="1.500"><path d="M2 4.500h5"/></g></svg><div class="a" style="left:883px;top:317px;width:395px;height:25px;background:#f1f1f4"></div><svg class="a" style="left:988px;top:319px" width="24" height="20" viewBox="0 0 24 20"><rect x="0" y="0" width="24" height="20" fill="#335a77"/><rect x="0" y="0" width="24" height="1.600" fill="#4f7393"/><rect x="0" y="1.600" width="24" height="3.400" fill="#8796a6"/><rect x="3" y="7" width="7.800" height="1.200" fill="#f4f6f8"/><rect x="12.200" y="7" width="8.800" height="3" fill="#fff"/></svg><div class="t tree" style="left:1033px;top:322px;letter-spacing:0.72px" >1301 Customer</div><svg class="a" style="left:942px;top:351px" width="9" height="9" viewBox="0 0 9 9"><rect x=".5" y=".5" width="8" height="8" fill="#fafafa" stroke="#a0a0a0"/><g stroke="#000" stroke-width="1.500"><path d="M2 4.500h5"/><path d="M4.500 2v5" /></g></svg><svg class="a" style="left:962px;top:345px" width="24" height="20" viewBox="0 0 24 20"><path d="M.3 3L1 .300h9.400l.900 2.700z" fill="#6a8db0"/><rect x="0" y="3" width="24" height="2" fill="#8998a8"/><rect x="0" y="3" width="11.300" height="2" fill="#7d93aa"/><rect x="0" y="4.900" width="24" height="15.100" fill="#335a77"/></svg><div class="t tree" style="left:1007px;top:348px;letter-spacing:0.56px" >1400 User</div><svg class="a" style="left:916px;top:377px" width="9" height="9" viewBox="0 0 9 9"><rect x=".5" y=".5" width="8" height="8" fill="#fafafa" stroke="#a0a0a0"/><g stroke="#000" stroke-width="1.500"><path d="M2 4.500h5"/><path d="M4.500 2v5" /></g></svg><svg class="a" style="left:936px;top:371px" width="24" height="20" viewBox="0 0 24 20"><path d="M.3 3L1 .300h9.400l.900 2.700z" fill="#6a8db0"/><rect x="0" y="3" width="24" height="2" fill="#8998a8"/><rect x="0" y="3" width="11.300" height="2" fill="#7d93aa"/><rect x="0" y="4.900" width="24" height="15.100" fill="#335a77"/></svg><div class="t tree" style="left:966px;top:374px;letter-spacing:0.61px" >3.Workspaces</div>
</div>

<!-- RIGHT: PROPERTIES PANEL -->
<div id="proppanel">
<div class="a" style="left:883px;top:409px;width:395px;height:4px;background:#cccedb"></div>
<div class="t" style="left:888px;top:415px;letter-spacing:-0.19px" id="propt">Properties</div>
<div class="hgrip" style="left:947px;top:421px;width:290px"></div>
<svg class="a" style="left:1245px;top:418px" width="8" height="10" viewBox="0 0 8 10" fill="none" stroke="#111" stroke-width="1"><path d="M2 .500h4M2 .500v5M5.500 .500v5" /><path d="M5 .500v5" stroke-width="1.600"/><path d="M.500 5.500h7M4 6v3.500" stroke-width="1.200"/></svg><svg class="a" style="left:1260px;top:419px" width="9" height="8" viewBox="0 0 9 8" stroke="#111" stroke-width="1.500"><path d="M.800 .600l7.400 6.600M8.200 .600l-7.400 6.600"/></svg>
<div class="a" style="left:883px;top:435px;width:26px;height:26px;border:1px solid #3396fb;background:#f2f1f3"></div>
<!-- categorized icon -->
<svg class="a" style="left:886px;top:438px" width="20" height="20" viewBox="0 0 20 20"><rect x="0" y=".2" width="8" height="7.800" fill="#335a77"/><rect x="0" y="11" width="8" height="7.800" fill="#335a77"/><path d="M4 8v3" stroke="#8a8f96" stroke-width="1.400"/><path d="M4 1.800l2.200 2.300-2.200 2.300-2.200-2.300z" fill="#35a06e"/><path d="M4 12.600l2.200 2.300-2.200 2.300-2.200-2.300z" fill="#1591d8"/><path d="M10 1.400h9" stroke="#35a06e" stroke-width="1.500"/><path d="M10 3.700h6.500" stroke="#8fb3a2" stroke-width="1.200"/><path d="M10 6h7" stroke="#5fa888" stroke-width="1.200"/><path d="M10 12.400h9" stroke="#1591d8" stroke-width="1.500"/><path d="M10 14.700h6.500" stroke="#5a9cc4" stroke-width="1.200"/><path d="M10 17h6.500" stroke="#8fb3c8" stroke-width="1.200"/></svg>
<div class="sep" style="left:911px;top:437px;height:24px"></div>
<svg class="a" style="left:918px;top:438px" width="20" height="19" viewBox="0 0 20 19"><path d="M0 1.800h19" stroke="#335a77" stroke-width="1.800"/><g stroke-width="1.600" stroke="#8fb5a4"><path d="M0 6h8M11 6h8M0 11h8M11 11h8"/></g><g stroke-width="1" stroke="#35a06e"><path d="M0 8.500h8M11 8.500h8"/></g><g stroke-width="1.600" stroke="#8fb3cc"><path d="M0 15h8M11 15h8"/></g><g stroke-width="1" stroke="#1591d8"><path d="M0 17.500h8M11 17.500h8"/></g></svg>
<div class="sep" style="left:943px;top:437px;height:24px"></div>
<div class="t" style="left:950.500px;top:437px;font-size:11.500px;font-weight:bold;color:#3a9f72;line-height:11px;height:11px">A</div>
<div class="t" style="left:951px;top:447.500px;font-size:11.500px;font-weight:bold;color:#dc3e3a;line-height:11px;height:11px">Z</div>
<svg class="a" style="left:960px;top:438px" width="9" height="20" viewBox="0 0 9 20" fill="none" stroke="#335a77" stroke-width="1.500"><path d="M4.500 1v2M4.500 5v3M4.500 10v8" stroke-width="1.800"/><path d="M.8 14.300l3.700 3.700 3.700-3.700" stroke-width="1.800"/></svg>
<div class="sep" style="left:975px;top:437px;height:24px"></div>
<div class="a" style="left:979px;top:437px;width:150px;height:22px;border:1px solid #c9c9cd;background:#f0f0f2"></div>
<svg class="a" style="left:1117px;top:447px" width="7" height="4" viewBox="0 0 7 4"><path d="M0 0h7L3.500 4z" fill="#b9b9bd"/></svg>
<div class="a" style="left:896px;top:464px;width:185px;height:18px;background:#f6f6f6"></div><div class="a" style="left:1082px;top:464px;width:179px;height:18px;background:#f6f6f6"></div><div class="t" style="left:899px;top:465px">Fore Color</div><div class="a" style="left:1084px;top:467px;width:19px;height:13px;background:#000"></div><div class="t" style="left:1109px;top:465px">0</div><div class="a" style="left:896px;top:483px;width:185px;height:18px;background:#f6f6f6"></div><div class="a" style="left:1082px;top:483px;width:179px;height:18px;background:#f6f6f6"></div><div class="t" style="left:899px;top:484px">Text Align</div><div class="t" style="left:1085px;top:484px">0-Left</div><svg class="a" style="left:884px;top:506px" width="9" height="9" viewBox="0 0 9 9"><rect x=".500" y=".500" width="8" height="8" fill="#fcfcfc" stroke="#3c3c3c"/><path d="M2 4.500h5" stroke="#000"/></svg><div class="t" style="left:899px;top:503px;font-weight:bold;letter-spacing:-0.150px">Position &amp; Size</div><div class="a" style="left:896px;top:521px;width:185px;height:18px;background:#f6f6f6"></div><div class="a" style="left:1082px;top:521px;width:179px;height:18px;background:#f6f6f6"></div><div class="t" style="left:899px;top:522px">Left</div><div class="a" style="left:896px;top:540px;width:185px;height:18px;background:#f6f6f6"></div><div class="a" style="left:1082px;top:540px;width:179px;height:18px;background:#f6f6f6"></div><div class="t" style="left:899px;top:541px">Top</div><div class="a" style="left:896px;top:559px;width:185px;height:18px;background:#f6f6f6"></div><div class="a" style="left:1082px;top:559px;width:179px;height:18px;background:#f6f6f6"></div><div class="t" style="left:899px;top:560px">Width</div><div class="a" style="left:896px;top:578px;width:185px;height:18px;background:#f6f6f6"></div><div class="a" style="left:1082px;top:578px;width:179px;height:18px;background:#f6f6f6"></div><div class="t" style="left:899px;top:579px">Height</div><div class="t" style="left:1085px;top:579px"><span style="letter-spacing:-0.350px">0,6см (340)</span></div><svg class="a" style="left:884px;top:601px" width="9" height="9" viewBox="0 0 9 9"><rect x=".500" y=".500" width="8" height="8" fill="#fcfcfc" stroke="#3c3c3c"/><path d="M2 4.500h5" stroke="#000"/></svg><div class="t" style="left:899px;top:598px;font-weight:bold;letter-spacing:-0.150px">Border</div><div class="a" style="left:896px;top:616px;width:185px;height:18px;background:#f6f6f6"></div><div class="a" style="left:1082px;top:616px;width:179px;height:18px;background:#f6f6f6"></div><div class="t" style="left:899px;top:617px">Border Style</div><div class="t" style="left:1085px;top:617px">0-None</div><div class="a" style="left:896px;top:635px;width:185px;height:18px;background:#f6f6f6"></div><div class="a" style="left:1082px;top:635px;width:179px;height:18px;background:#f6f6f6"></div><div class="t" style="left:899px;top:636px">Border Color</div><div class="a" style="left:1084px;top:638px;width:19px;height:13px;background:#000"></div><div class="t" style="left:1109px;top:636px">0</div><div class="a" style="left:896px;top:654px;width:185px;height:18px;background:#f6f6f6"></div><div class="a" style="left:1082px;top:654px;width:179px;height:18px;background:#f6f6f6"></div><div class="t" style="left:899px;top:655px">Border Width</div><div class="t" style="left:1085px;top:655px">0-Hairline</div>
<!-- ellipsis button -->
<div class="a" style="left:1244px;top:578px;width:17px;height:17px;background:#fdfdfd;border:1px solid #e1e1e6"></div>
<div class="a" style="left:1247px;top:589px;width:2px;height:2px;background:#111;box-shadow:4px 0 0 #111,8px 0 0 #111"></div>
<!-- v scrollbar -->
<div class="a" style="left:1262px;top:464px;width:16px;height:212px;background:#f1f1f3"></div>
<div class="a" style="left:1262px;top:528px;width:15px;height:85px;background:#cdcdcd"></div>
<svg class="a" style="left:1265px;top:470px" width="9" height="7" viewBox="0 0 9 7" fill="none" stroke="#3c3c3c" stroke-width="1.700"><path d="M.8 5.800L4.500 1.800l3.700 4"/></svg>
<svg class="a" style="left:1265px;top:665px" width="9" height="7" viewBox="0 0 9 7" fill="none" stroke="#3c3c3c" stroke-width="1.700"><path d="M.8 1.200L4.500 5.200l3.700-4"/></svg>
<!-- description -->
<div class="a" style="left:881px;top:677px;width:397px;height:61px;background:#f5f5f5"></div><div class="a" style="left:881px;top:680px;width:397px;height:1px;background:#ededf0"></div>
<div class="t" style="left:887px;top:683px;font-weight:bold" id="hdesc">Height</div>
</div>

</body>
</html>
